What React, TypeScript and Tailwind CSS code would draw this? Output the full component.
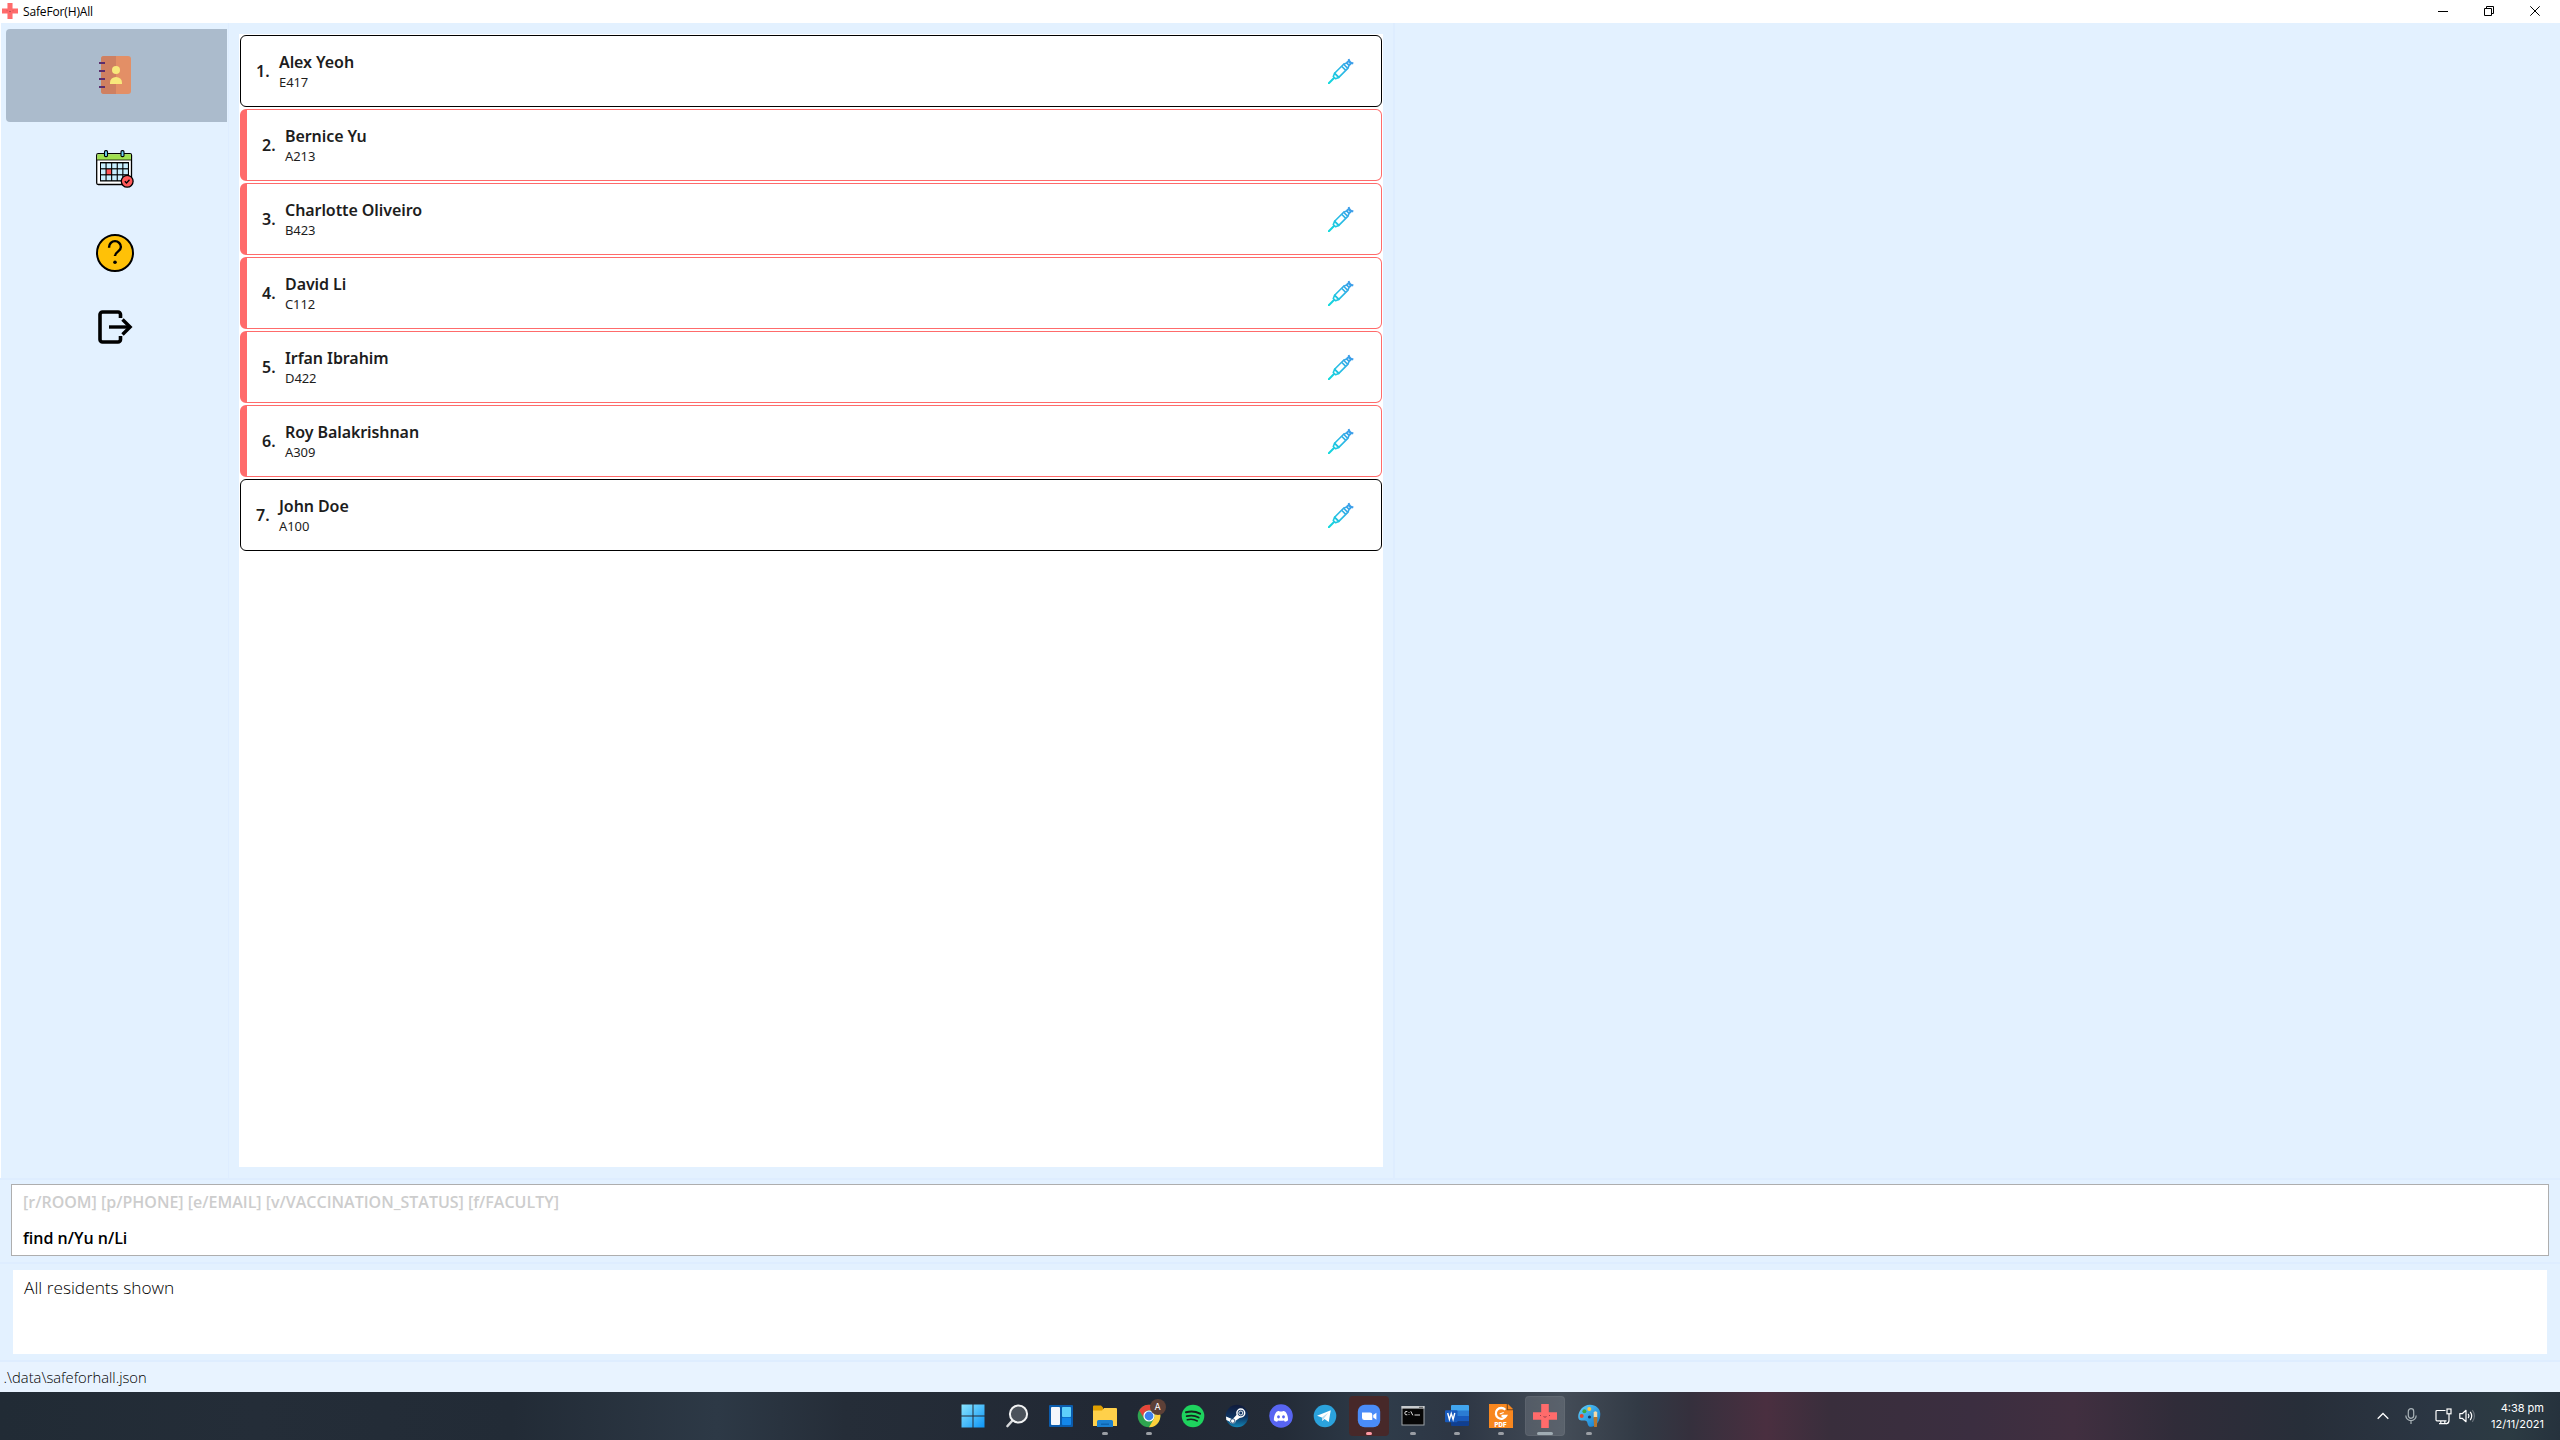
import React from "react";

type Resident = { name: string; room: string; flagged: boolean; vaccinated: boolean };

const residents: Resident[] = [
  { name: "Alex Yeoh", room: "E417", flagged: false, vaccinated: true },
  { name: "Bernice Yu", room: "A213", flagged: true, vaccinated: false },
  { name: "Charlotte Oliveiro", room: "B423", flagged: true, vaccinated: true },
  { name: "David Li", room: "C112", flagged: true, vaccinated: true },
  { name: "Irfan Ibrahim", room: "D422", flagged: true, vaccinated: true },
  { name: "Roy Balakrishnan", room: "A309", flagged: true, vaccinated: true },
  { name: "John Doe", room: "A100", flagged: false, vaccinated: true },
];

/* ---------- application icons ---------- */

function PlusLogo({ className }: { className: string }) {
  return (
    <svg viewBox="0 0 24 24" className={className}>
      <path d="M8.2 0h7.6v8.2H24v7.6h-8.2V24H8.2v-8.2H0V8.2h8.2z" fill="#ff6b6b" />
      <path d="M10.5 12.6q1.5 1.2 3 0M7 11.5h1M16 11.5h1" stroke="#8a3b46" strokeWidth="0.9" fill="none" />
    </svg>
  );
}

function ContactBookIcon() {
  return (
    <svg width="38" height="38" viewBox="96 56 38 38">
      <rect x="101" y="56" width="30" height="38" rx="3" fill="#e38f66" />
      <path d="M104 56h12v38h-12a3 3 0 0 1-3-3V59a3 3 0 0 1 3-3z" fill="#cf8061" />
      <path d="M99 63h6M99 71h6M99 79h6M99 87h6" stroke="#5b2e6d" strokeWidth="2" />
      <circle cx="116" cy="70" r="4" fill="#f8e87b" />
      <path d="M110 84v-1.500a6 5.500 0 0 1 12 0V84z" fill="#f8e87b" />
    </svg>
  );
}

function CalendarIcon() {
  const cols = [0, 1, 2, 3, 4];
  const rows = [0, 1, 2];
  return (
    <svg width="38" height="38" viewBox="96 150 38 38">
      <rect x="96.7" y="153.700" width="34.800" height="30.800" rx="1.500" fill="#fff" stroke="#000" strokeWidth="1.300" />
      <path d="M97.300 154.300h33.600v5.700H97.300z" fill="#9fe04f" />
      <path d="M97 160h34" stroke="#000" strokeWidth="0.800" />
      <rect x="104.500" y="150.600" width="3" height="6" rx="1.200" fill="#6dcff6" stroke="#000" strokeWidth="1.100" />
      <rect x="121" y="150.600" width="3" height="6" rx="1.200" fill="#6dcff6" stroke="#000" strokeWidth="1.100" />
      <rect x="100" y="162" width="29" height="19.500" fill="#000" />
      {rows.map((r) =>
        cols.map((c) => (
          <rect
            key={`${r}-${c}`}
            x={101 + c * 5.6}
            y={163.4 + r * 6}
            width="4.500"
            height="4.800"
            fill={r === 1 && c === 1 ? "#ff5656" : "#c8effe"}
          />
        ))
      )}
      <circle cx="127.200" cy="181.300" r="5.900" fill="#ff5a5a" stroke="#000" strokeWidth="1.300" />
      <path d="M124.800 181.300l1.700 1.700 3-3.200" stroke="#000" strokeWidth="1.300" fill="none" />
    </svg>
  );
}

function HelpIcon() {
  return (
    <svg width="38" height="38" viewBox="96 234 38 38">
      <circle cx="115" cy="253" r="18" fill="#ffc107" stroke="#000" strokeWidth="2" />
      <path d="M109.100 247.800v-.8a5.900 5.900 0 0 1 11.800 0c0 4.800-5.900 4.400-5.900 9" stroke="#000" strokeWidth="2.400" fill="none" />
      <circle cx="115" cy="262.300" r="1.800" fill="#000" />
    </svg>
  );
}

function ExitIcon() {
  return (
    <svg width="38" height="38" viewBox="96 308 38 38">
      <path
        d="M120.500 318v-3.500a2.500 2.500 0 0 0-2.500-2.500h-15.500a2.500 2.500 0 0 0-2.500 2.500v25a2.500 2.500 0 0 0 2.500 2.500H118a2.500 2.500 0 0 0 2.500-2.500V336"
        stroke="#000"
        strokeWidth="3.600"
        fill="none"
      />
      <path d="M109 327h21" stroke="#000" strokeWidth="3.400" />
      <path d="M122.500 319.500l7.600 7.500-7.600 7.500" stroke="#000" strokeWidth="3.400" fill="none" />
    </svg>
  );
}

function SyringeIcon() {
  return (
    <svg width="26" height="26" viewBox="0 0 26 26">
      <defs>
        <linearGradient id="syringe" gradientUnits="userSpaceOnUse" x1="0" y1="26" x2="26" y2="0">
          <stop offset="0" stopColor="#0fdcdc" />
          <stop offset="1" stopColor="#4595ec" />
        </linearGradient>
      </defs>
      <g fill="none" stroke="url(#syringe)" strokeWidth="1.600" strokeLinejoin="round">
        <path d="M0.800 25.200l5.200-5.200" strokeWidth="2" strokeLinecap="round" />
        <path d="M5 18.200l2.800 2.800M5.300 18.500l1.300-3.300 4.200 4.200-3.300 1.300z" />
        <path d="M6.600 15.200l9-9 4.200 4.200-9 9z" />
        <path d="M13.600 8.200l4.200 4.200M15.600 6.200l3-1.300 2.500 2.500-1.300 3" />
        <path d="M18.600 4.900l1.800-1.800 2.500 2.500-1.800 1.800M20.600 1l1 2.400 1.300 1.300 2.400.8" strokeWidth="1.900" />
      </g>
    </svg>
  );
}

/* ---------- taskbar icons ---------- */

function StartIcon() {
  return (
    <svg width="24" height="24" viewBox="0 0 24 24">
      <defs>
        <linearGradient id="start" x1="0" y1="0" x2="24" y2="24" gradientUnits="userSpaceOnUse">
          <stop offset="0" stopColor="#8ce6ff" />
          <stop offset="1" stopColor="#0a93f5" />
        </linearGradient>
      </defs>
      <path d="M.5.500h11v11H.5zM12.500.500h11v11h-11zM.5 12.500h11v11H.5zM12.500 12.500h11v11h-11z" fill="url(#start)" />
    </svg>
  );
}

function SearchIcon() {
  return (
    <svg width="24" height="24" viewBox="0 0 24 24">
      <path d="M7.500 16.500L2.500 22" stroke="#d6d8da" strokeWidth="2.600" strokeLinecap="round" />
      <circle cx="13.500" cy="10" r="8.600" fill="#4b525b" stroke="#f1f2f3" strokeWidth="2" />
    </svg>
  );
}

function WidgetsIcon() {
  return (
    <svg width="24" height="24" viewBox="0 0 24 24">
      <rect y="1" width="24" height="22" rx="1" fill="#0b5cad" />
      <rect x="2" y="3" width="9" height="18" rx="1" fill="#f4f7fb" />
      <rect x="13" y="3" width="9" height="10" rx="0.800" fill="#5fd0fb" />
      <rect x="13" y="13.500" width="9" height="7.500" rx="0.800" fill="#1487ea" />
    </svg>
  );
}

function ExplorerIcon() {
  return (
    <svg width="24" height="24" viewBox="0 0 24 24">
      <path d="M0 2.500a1 1 0 0 1 1-1h7l2 2v5H0z" fill="#e0a000" />
      <path d="M0 6.500h9l2-2.500h12a1 1 0 0 1 1 1v17H0z" fill="#ffd04a" />
      <path d="M4 23v-5.500a1.500 1.500 0 0 1 1.500-1.500h13a1.500 1.500 0 0 1 1.500 1.500V23z" fill="#1b80cf" />
      <path d="M8 20.200h8" stroke="#0c5ea6" strokeWidth="1.200" />
    </svg>
  );
}

function ChromeIcon() {
  return (
    <svg width="24" height="24" viewBox="0 0 24 24">
      <circle cx="12" cy="12" r="11.300" fill="#2ea44f" />
      <path d="M2.200 6.350A11.300 11.300 0 0 1 21.800 6.350H12a5.650 5.650 0 0 0-4.900 8.480z" fill="#e5453a" />
      <path d="M21.800 6.350A11.300 11.300 0 0 1 12 23.300l4.900-8.480A5.650 5.650 0 0 0 12 6.350z" fill="#fdd03b" />
      <circle cx="12" cy="12" r="5.600" fill="#fff" />
      <circle cx="12" cy="12" r="4.400" fill="#3b80ee" />
    </svg>
  );
}

function SpotifyIcon() {
  return (
    <svg width="24" height="24" viewBox="0 0 24 24">
      <circle cx="12" cy="12" r="11.300" fill="#1ed35e" />
      <g stroke="#17231d" fill="none" strokeLinecap="round">
        <path d="M5 8.300q7.500-2.200 14 1.400" strokeWidth="2.100" />
        <path d="M5.700 12.200q6.400-1.800 12 1.300" strokeWidth="1.800" />
        <path d="M6.300 15.800q5.400-1.400 10 1.200" strokeWidth="1.500" />
      </g>
    </svg>
  );
}

function SteamIcon() {
  return (
    <svg width="24" height="24" viewBox="0 0 24 24">
      <defs>
        <linearGradient id="steam" x1="0" y1="0" x2="0" y2="1">
          <stop offset="0" stopColor="#101a3a" />
          <stop offset="0.550" stopColor="#0e3563" />
          <stop offset="1" stopColor="#1387b8" />
        </linearGradient>
      </defs>
      <circle cx="12" cy="12" r="11.300" fill="url(#steam)" />
      <path d="M1 12.500l6.500 2.700 4.200-4.500L16 13l-5 3.500a3.400 3.400 0 0 1-6.500 1L1.300 16z" fill="#fff" />
      <circle cx="15.800" cy="9" r="3.900" fill="#163a68" stroke="#fff" strokeWidth="1.500" />
      <circle cx="15.800" cy="9" r="2" fill="none" stroke="#fff" strokeWidth="0.900" />
      <circle cx="7.700" cy="17" r="2.200" fill="none" stroke="#143b69" strokeWidth="0.800" />
    </svg>
  );
}

function DiscordIcon() {
  return (
    <svg width="24" height="24" viewBox="0 0 24 24">
      <circle cx="12" cy="12" r="11.800" fill="#5865f2" />
      <path
        d="M8.800 7.200c.5-.2 1-.3 1.400-.3l.3.700c1-.2 2-.2 3 0l.3-.7c.5 0 1 .1 1.400.3 2.300.5 4 5 3.900 9-.9.800-1.900 1.300-3.200 1.500l-.9-1.300c-2 .6-4 .6-6 0l-.9 1.300c-1.300-.2-2.300-.7-3.200-1.500-.1-4 1.600-8.500 3.900-9z"
        fill="#fff"
      />
      <ellipse cx="9.500" cy="12.800" rx="1.400" ry="1.600" fill="#5865f2" />
      <ellipse cx="14.500" cy="12.800" rx="1.400" ry="1.600" fill="#5865f2" />
    </svg>
  );
}

function TelegramIcon() {
  return (
    <svg width="24" height="24" viewBox="0 0 24 24">
      <circle cx="12" cy="12" r="11.300" fill="#2ba2dc" />
      <path d="M4 11.800L17.800 6.300 15.700 18l-4.200-3.100-2.200 2.200-.4-3.700z" fill="#fff" />
      <path d="M8.900 13.400l6.300-4.700-4 5.300-1.900 3z" fill="#b9dcf0" />
    </svg>
  );
}

function ZoomIcon() {
  return (
    <svg width="24" height="24" viewBox="0 0 24 24">
      <rect x="0.800" y="0.800" width="22.400" height="22.400" rx="7" fill="#4a8cf8" />
      <path d="M5 8.500h8a2.300 2.300 0 0 1 2.300 2.300V16h-8A2.300 2.300 0 0 1 5 13.700zM16.200 11l3.200-2.300v7L16.200 13.500z" fill="#fff" />
    </svg>
  );
}

function TerminalIcon() {
  return (
    <svg width="24" height="24" viewBox="0 0 24 24">
      <rect x="1" y="2.500" width="22" height="18.500" fill="#060606" stroke="#9da3a8" strokeWidth="1" />
      <rect x="0.500" y="2" width="23" height="2.600" fill="#c7cacd" />
      <path d="M18 3.300h4" stroke="#555" strokeWidth="1" />
      <path d="M6.300 7.500q-2.500-.6-2.500 1.600t2.500 1.700M8 8v.8M8 10v.8M9.800 7.300l2 4M13.500 11h5.500" stroke="#e0e0e0" strokeWidth="1" fill="none" />
    </svg>
  );
}

function WordIcon() {
  return (
    <svg width="24" height="24" viewBox="0 0 24 24">
      <path d="M6 2a1 1 0 0 1 1-1h16a1 1 0 0 1 1 1v5H6z" fill="#41a5ee" />
      <path d="M6 6.500h18V12H6z" fill="#2b7cd3" />
      <path d="M6 12h18v5.500H6z" fill="#185abd" />
      <path d="M6 17.500h18V21a1 1 0 0 1-1 1H7a1 1 0 0 1-1-1z" fill="#103f91" />
      <rect y="6.300" width="12.500" height="12" rx="1" fill="#185abd" />
      <path d="M2.700 9l1.700 6.400L6.250 9.500l1.850 5.900L9.800 9" stroke="#fff" strokeWidth="1.400" fill="none" />
    </svg>
  );
}

function FoxitIcon() {
  return (
    <span className="relative flex size-6 items-end justify-center overflow-hidden">
      <svg width="24" height="24" viewBox="0 0 24 24" className="absolute inset-0">
        <path d="M0 0h18l6 6v18H0z" fill="#f8871f" />
        <path d="M19 0l5 5h-5z" fill="#f8871f" />
        <path d="M18.300 0v5.700H24" stroke="#7b4a1c" strokeWidth="1.100" fill="none" />
        <path d="M16.300 5.800a5.400 5.400 0 1 0 .8 6h-4.600" stroke="#fff" strokeWidth="2.300" fill="none" />
        <path d="M14.700 8.500l-4 1.500" stroke="#fff" strokeWidth="1.300" />
      </svg>
      <span className="relative font-['Inter'] text-[6px] leading-[6px] font-black text-white">PDF</span>
    </span>
  );
}

function PaintIcon() {
  return (
    <svg width="24" height="24" viewBox="0 0 24 24">
      <defs>
        <linearGradient id="paint" x1="0" y1="0" x2="1" y2="1">
          <stop offset="0" stopColor="#5fd0fb" />
          <stop offset="1" stopColor="#0f78cf" />
        </linearGradient>
      </defs>
      <path
        d="M13 .7c6 0 10.300 4 10.300 9.300 0 6-3.300 12.500-9.300 12.800-3.700 0-3-3.500-4.200-5.300-1.700-2.300-5.600.4-8-2.300C-.5 11 4 .7 13 .7z"
        fill="url(#paint)"
      />
      <circle cx="12.300" cy="5" r="2" fill="#ffc83d" />
      <circle cx="7.400" cy="7.300" r="2" fill="#3fa83f" />
      <circle cx="4.700" cy="12" r="2" fill="#e8452c" />
      <circle cx="12.500" cy="13" r="1.600" fill="#14406f" />
      <path d="M16.700 8.500q1.700-2.500 3.500 0v5h-3.500z" fill="#f2d9a8" />
      <path d="M16.500 13h4l-.6 10h-2.800z" fill="#b4762e" />
    </svg>
  );
}

type Task = { id: string; icon: React.ReactNode; state?: "running" | "active" | "alert"; badge?: string };

const tasks: Task[] = [
  { id: "start", icon: <StartIcon /> },
  { id: "search", icon: <SearchIcon /> },
  { id: "widgets", icon: <WidgetsIcon /> },
  { id: "explorer", icon: <ExplorerIcon />, state: "running" },
  { id: "chrome", icon: <ChromeIcon />, state: "running", badge: "A" },
  { id: "spotify", icon: <SpotifyIcon /> },
  { id: "steam", icon: <SteamIcon /> },
  { id: "discord", icon: <DiscordIcon /> },
  { id: "telegram", icon: <TelegramIcon /> },
  { id: "zoom", icon: <ZoomIcon />, state: "alert" },
  { id: "terminal", icon: <TerminalIcon />, state: "running" },
  { id: "word", icon: <WordIcon />, state: "running" },
  { id: "foxit", icon: <FoxitIcon />, state: "running" },
  { id: "safeforhall", icon: <PlusLogo className="size-6" />, state: "active" },
  { id: "paint", icon: <PaintIcon />, state: "running" },
];

const tileStyles = {
  none: "",
  running: "",
  active: "bg-white/12 ring-1 ring-inset ring-white/5",
  alert: "bg-[#472829]",
};

const markStyles = {
  none: "hidden",
  running: "w-1.5 bg-[#9a9ea4]",
  active: "w-4 bg-[#a0acb3]",
  alert: "w-1.5 bg-[#ff99a4]",
};

function TaskButton({ task }: { task: Task }) {
  const state = task.state ?? "none";
  return (
    <button className={`relative flex size-10 items-center justify-center rounded ${tileStyles[state]}`}>
      {task.icon}
      {task.badge && (
        <span className="absolute top-[3px] right-[3px] flex size-4 items-center justify-center rounded-full bg-[#5d4037] font-['Inter'] text-[9px] leading-4 text-white">
          {task.badge}
        </span>
      )}
      <span className={`absolute bottom-px left-1/2 h-[3px] -translate-x-1/2 rounded-full ${markStyles[state]}`} />
    </button>
  );
}

function Taskbar() {
  return (
    <footer className="flex h-12 items-center justify-between bg-[linear-gradient(90deg,#212b35_0%,#242d38_10%,#222b36_20%,#2d3946_28%,#252d38_33%,#212834_44%,#232b37_50%,#2f3c4a_54%,#2d3644_57%,#444d58_61%,#323a45_64%,#35303d_66%,#4a2f40_69%,#392e3c_71.5%,#3b2e40_77%,#412f40_81%,#302c39_85%,#272e39_90%,#2b3643_95%,#2c3b43_98%,#26323d_100%)]">
      <div className="flex-1 pl-[17px]" />
      <div className="flex gap-1">
        {tasks.map((t) => (
          <TaskButton key={t.id} task={t} />
        ))}
      </div>
      <div className="flex flex-1 items-center justify-end pr-4 text-white">
        <svg width="12" height="8" viewBox="0 0 12 8" fill="none" stroke="#fff" strokeWidth="1.300">
          <path d="M.7 6.800L6 1.500l5.300 5.300" />
        </svg>
        <svg width="12" height="16" viewBox="0 0 12 16" fill="none" stroke="#aab3b8" strokeWidth="1.200" className="ml-4">
          <rect x="3.300" y=".7" width="5.400" height="9.600" rx="2.700" />
          <path d="M.8 7.500a5.200 5.200 0 0 0 10.400 0M6 12.700V16" />
        </svg>
        <svg width="17" height="17" viewBox="0 0 17 17" fill="none" stroke="#fff" strokeWidth="1.200" className="ml-[18px]">
          <path d="M10.500 2.500H2a1 1 0 0 0-1 1v8.300a1 1 0 0 0 1 1h9.500M4 15.700h8M5.800 13v2.500M9.800 13v2.500" />
          <rect x="12" y="1" width="4" height="4.800" />
          <path d="M14 5.800v6.500q0 3.200-2.500 3.400" />
        </svg>
        <svg width="17" height="14" viewBox="0 0 17 14" fill="none" stroke="#fff" strokeWidth="1.200" className="ml-[7px]">
          <path d="M.8 4.700h2.400L7 1.300v11.400L3.200 9.300H.8z" strokeLinejoin="round" />
          <path d="M9.200 4.800q1.500 2.200 0 4.400M11.200 2.900q3 4.100 0 8.200" />
          <path d="M13.300 1.200q4.300 5.800 0 11.600" stroke="#69727b" />
        </svg>
        <div className="ml-[15px] text-right font-['Inter',sans-serif] text-[11px] leading-4">
          <div>4:38 pm</div>
          <div>12/11/2021</div>
        </div>
      </div>
    </footer>
  );
}

/* ---------- application window ---------- */

function TitleBar() {
  return (
    <header className="flex h-[23px] items-start justify-between bg-white">
      <div className="flex items-start pt-[3px] pl-0.5">
        <PlusLogo className="size-4" />
        <span className="ml-[5px] pt-px font-['Open_Sans',sans-serif] text-[12px] leading-4 tracking-[-0.15px] text-black">SafeFor(H)All</span>
      </div>
      <div className="flex h-[21px] items-center pr-0.5">
        {["M0 5.500h10", "M.5 2.500h7v7h-7zM2.500 2.500V.5h7v7h-2", "M.3.300l9.400 9.400M9.700.300L.3 9.700"].map((d) => (
          <span key={d} className="flex w-[46px] justify-center">
            <svg width="10" height="10" viewBox="0 0 10 10" fill="none" stroke="#000" strokeWidth="1">
              <path d={d} />
            </svg>
          </span>
        ))}
      </div>
    </header>
  );
}

function Sidebar() {
  return (
    <nav className="flex w-[227px] flex-col pt-1.5 pl-[5px]">
      <button className="flex h-[93px] w-[221px] items-center justify-center rounded-l bg-[#abbbcc] pr-[3px] pb-px">
        <ContactBookIcon />
      </button>
      <button className="flex h-[93px] w-[218px] items-center justify-center">
        <CalendarIcon />
      </button>
      <button className="flex h-[76px] w-[218px] items-center justify-center">
        <HelpIcon />
      </button>
      <button className="flex h-[72px] w-[218px] items-center justify-center">
        <ExitIcon />
      </button>
    </nav>
  );
}

function ResidentCard({ resident, index }: { resident: Resident; index: number }) {
  const frame = resident.flagged
    ? "rounded-md border border-l-[7px] border-[#ff6b6b]"
    : "rounded-md border border-black";
  return (
    <li className={`flex h-[72px] items-center bg-white pr-[27px] pl-[15px] font-['Noto_Sans',sans-serif] text-[#1d1d1d] ${frame}`}>
      <span className="w-[23px] text-[16px] leading-[22px] font-semibold">{index}.</span>
      <div>
        <div className="text-[16px] leading-[22px] font-semibold tracking-[-0.08px]">{resident.name}</div>
        <div className="text-[13px] leading-[18px] tracking-[-0.1px]">{resident.room}</div>
      </div>
      {resident.vaccinated && (
        <span className="ml-auto">
          <SyringeIcon />
        </span>
      )}
    </li>
  );
}

export default function App() {
  return (
    <div className="flex h-[1440px] w-[2560px] flex-col overflow-hidden bg-white">
      <TitleBar />
      <main className="ml-px flex h-[1155px] bg-[#e3f1ff]">
        <Sidebar />
        <section className="w-[1165px] border-l border-[#deedff] pt-[11px] pl-[10px]">
          <ul className="flex h-[1133px] w-[1144px] flex-col gap-0.5 bg-white px-px pt-px">
            {residents.map((r, i) => (
              <ResidentCard key={r.name} resident={r} index={i + 1} />
            ))}
          </ul>
        </section>
        <section className="flex-1 border-l-2 border-[#deedff]" />
      </main>
      <section className="h-[84px] border-t-2 border-[#deedff] bg-[#e3f1ff] px-[11px] pt-1">
        <div className="flex h-[72px] flex-col gap-3 border border-[#aeaeae] bg-white pt-[5px] pl-[11px] font-['Open_Sans',sans-serif] text-[16px] leading-6 font-semibold">
          <div className="text-[#cdcdcd]">[r/ROOM] [p/PHONE] [e/EMAIL] [v/VACCINATION_STATUS] [f/FACULTY]</div>
          <div className="text-black">find n/Yu n/Li</div>
        </div>
      </section>
      <section className="h-[100px] border-y-2 border-[#deedff] bg-[#e3f1ff] px-[13px] pt-1.5">
        <div className="h-[84px] bg-white pt-1.5 pl-[11px] font-['Open_Sans',sans-serif] text-[17.3px] leading-6 font-light text-black">
          All residents shown
        </div>
      </section>
      <div className="h-[30px] bg-[#e8f3ff] pt-[5px] pl-[3.5px] font-['Open_Sans',sans-serif] text-[14.75px] leading-5 font-light text-black">
        .\data\safeforhall.json
      </div>
      <Taskbar />
    </div>
  );
}
